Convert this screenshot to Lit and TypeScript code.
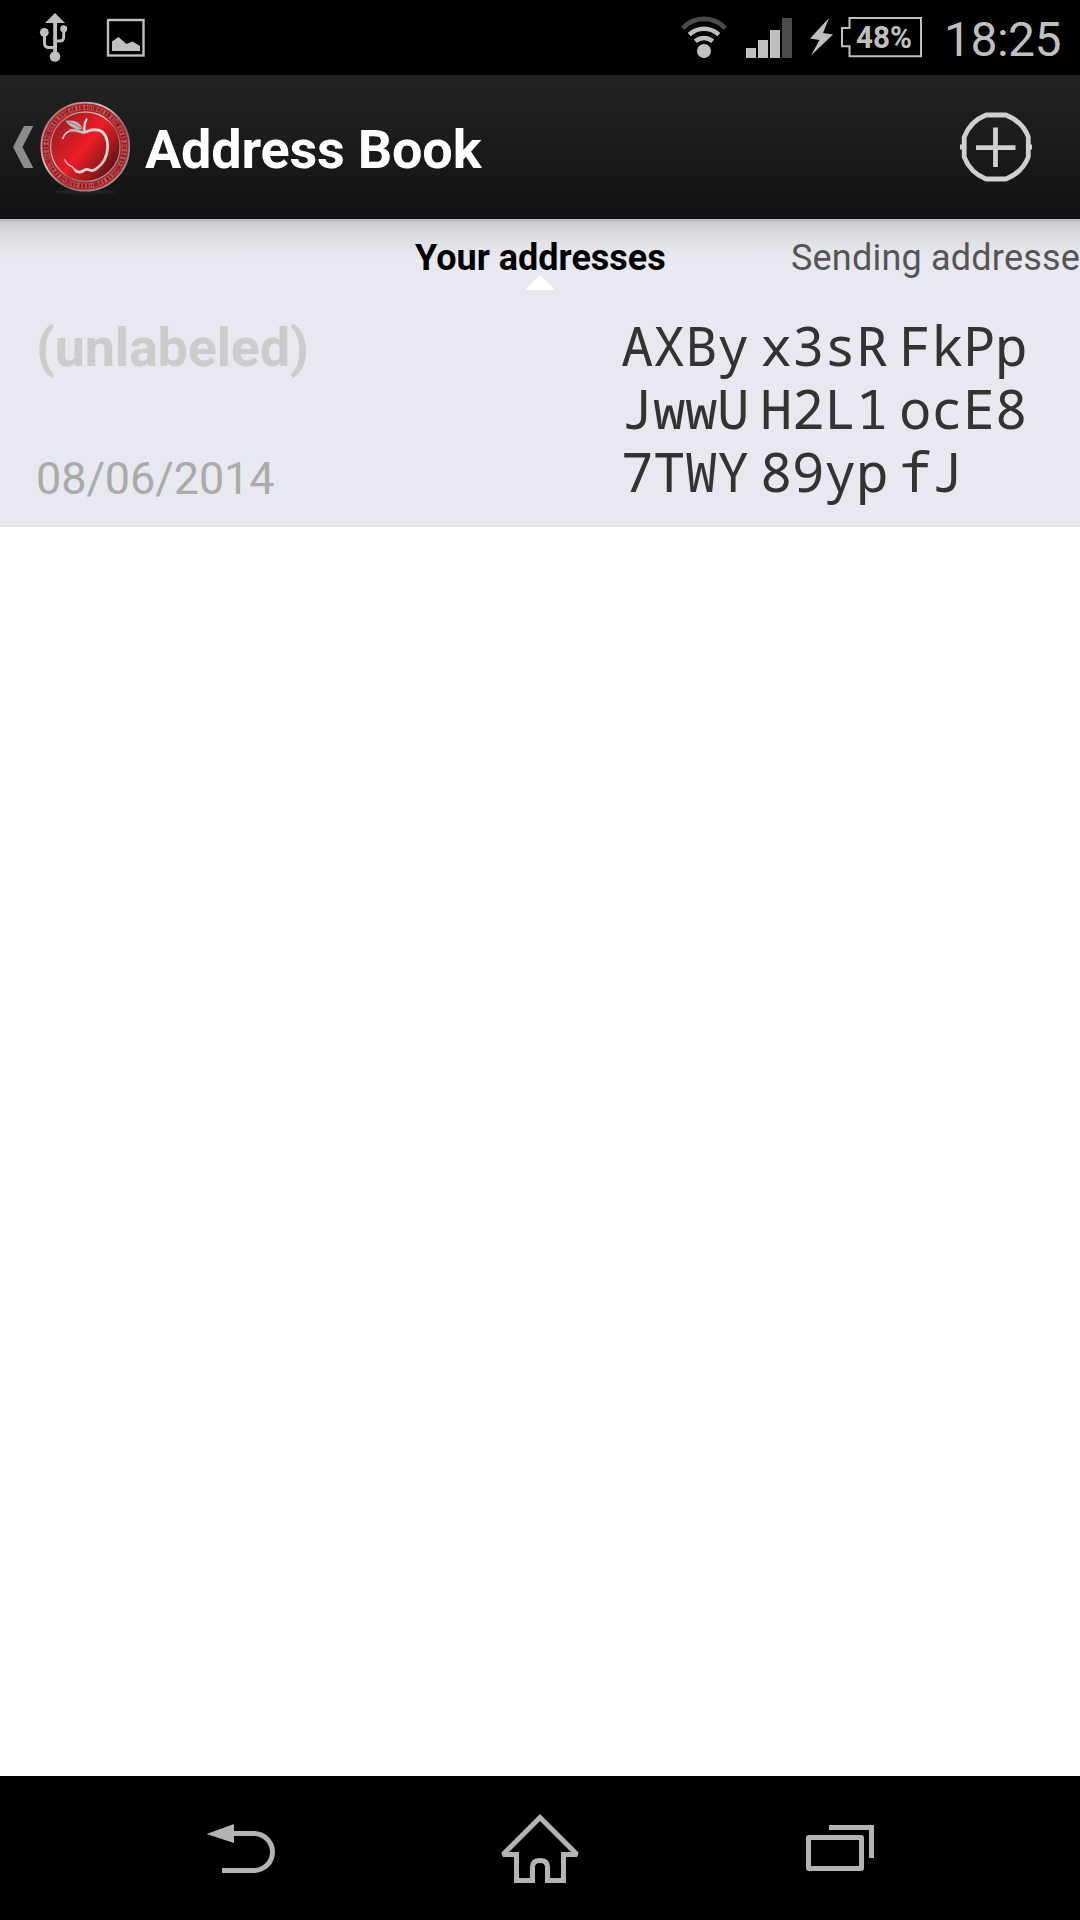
import { LitElement, html, css, svg } from "lit";
import { customElement, property } from "lit/decorators.js";

interface AddressEntry {
  label: string;
  date: string;
  lines: string[][];
}

@customElement("status-bar")
class StatusBar extends LitElement {
  static styles = css`
    :host {
      display: flex;
      justify-content: space-between;
      height: 75px;
      background: #000;
      color: #bfbfbf;
    }
    svg { display: block; }
    .right { display: flex; }
    .time {
      font-size: 48px;
      line-height: 79px;
      letter-spacing: -0.5px;
      width: 136px;
    }
    .pct { font: 700 31px Roboto, sans-serif; }
  `;
  render() {
    return html`
      <svg width="200" height="75" viewBox="0 0 200 75" fill="#bfbfbf">
        <path d="M55 13L65 23H45Z" />
        <path d="M53.2 20h3.8v34h-3.8z" />
        <circle cx="55" cy="56.5" r="5.3" />
        <circle cx="44.3" cy="32.3" r="4.4" />
        <circle cx="63.7" cy="28.8" r="3.5" />
        <path d="M44.5 33v10q0 4.5 4.5 4.5h6M63.7 29v8q0 4-4 4H56" fill="none" stroke="#bfbfbf" stroke-width="3" />
        <rect x="108" y="20" width="35.500" height="35.500" fill="none" stroke="#bfbfbf" stroke-width="2.400" />
        <path d="M112 51V41.500L118.500 37L126.500 44L132.500 41.500L140 46V51Z" />
      </svg>
      <div class="right">
        <svg width="284" height="75" viewBox="660 0 284 75" fill="#bfbfbf">
          <g fill="none" stroke-width="4.600">
            <path d="M682.700 28.200A29 29 0 0 1 725.300 28.200" stroke="#4c4c4c" />
            <path d="M689.200 34.700A21.500 21.500 0 0 1 718.800 34.700" stroke="#bfbfbf" />
            <path d="M695.300 41.300A13 13 0 0 1 712.700 41.300" stroke="#bfbfbf" />
          </g>
          <circle cx="704" cy="51" r="7" />
          <path d="M746 48h10v10h-10zM758 40h10v18h-10zM770 30h10v28h-10z" />
          <path d="M782 18h10v40h-10z" fill="#4c4c4c" />
          <path d="M829 18L810 38.500L819.500 40L811 55.500L833 34.500L823 33Z" />
          <path d="M849.500 18H921V56.200H849.500V46.200H842V28H849.500Z" fill="none" stroke="#bfbfbf" stroke-width="2" />
          <text class="pct" x="856" y="47.800" textLength="56" lengthAdjust="spacingAndGlyphs">48%</text>
        </svg>
        <div class="time">18:25</div>
      </div>
    `;
  }
}

@customElement("action-bar")
class ActionBar extends LitElement {
  @property() heading = "";
  static styles = css`
    :host {
      display: flex;
      align-items: center;
      height: 144px;
      background: linear-gradient(#232323, #121212);
    }
    svg { display: block; }
    .heading {
      flex: 1;
      margin: 5px 0 0;
      font-size: 54px;
      line-height: 64px;
      font-weight: 700;
      letter-spacing: -0.2px;
      color: #fff;
      white-space: nowrap;
    }
  `;
  render() {
    return html`
      <svg width="145" height="144" viewBox="0 75 145 144">
        <defs>
          <linearGradient id="face" x1="0" y1="0.100" x2="1" y2="0.900">
            <stop offset="0" stop-color="#8d1b20" />
            <stop offset="0.250" stop-color="#c01d24" />
            <stop offset="0.500" stop-color="#ed1c24" />
            <stop offset="0.720" stop-color="#a3191f" />
            <stop offset="1" stop-color="#3d0c0e" />
          </linearGradient>
          <linearGradient id="rim" x1="0" y1="0" x2="1" y2="1">
            <stop offset="0" stop-color="#9b5a5c" />
            <stop offset="0.400" stop-color="#d9c5c5" />
            <stop offset="0.600" stop-color="#8b6666" />
            <stop offset="1" stop-color="#aaa" />
          </linearGradient>
          <linearGradient id="silver" x1="0" y1="0" x2="1" y2="1">
            <stop offset="0" stop-color="#b9a5a5" />
            <stop offset="0.500" stop-color="#ece6e6" />
            <stop offset="1" stop-color="#c5b5b5" />
          </linearGradient>
        </defs>
        <path d="M24 126H33.300L22.500 147L33.300 168H24L13 147Z" fill="#8c8c8c" />
        <ellipse cx="85" cy="192" rx="31" ry="2.500" fill="#2a2a2a" opacity="0.600" />
        <circle cx="85.300" cy="146.700" r="44" fill="#b81f26" stroke="url(#rim)" stroke-width="1.700" />
        <circle cx="85.300" cy="146.700" r="39.200" fill="none" stroke="#ad8284" stroke-width="5"
          stroke-dasharray="1.500 1.200 2.500 1.400 1.200 2.200 3 1.300" opacity="0.600" />
        <circle cx="85.300" cy="146.700" r="39.200" fill="none" stroke="#5f1115" stroke-width="3"
          stroke-dasharray="2 2.600 1.200 2.900 1.500 2.100" opacity="0.650" />
        <circle cx="85.300" cy="146.700" r="34.700" fill="url(#face)" stroke="url(#rim)" stroke-width="1.300" />
        <g fill="none" stroke="url(#silver)" stroke-linecap="round" stroke-linejoin="round">
          <path d="M62.800 138.500Q64.500 132.500 71 130.500" stroke-width="1.500" />
          <path d="M70 130.700Q75.500 129.500 80 131.500Q84.500 133.300 88.500 131Q93 129 98.500 130.200C105 132 108 139.500 107.700 147C107.300 156.500 102.500 164.500 96.500 168.700Q92.500 171.700 89.500 170Q86 168.500 83.500 170.800Q79 173.500 75.500 170.500" stroke-width="2.800" />
          <path d="M76 171Q73.500 169 72.500 167Q67.500 165 64.500 159.500" stroke-width="1.500" />
          <path d="M84.500 130.500Q83.500 124.500 86.500 119.500" stroke-width="2.400" />
        </g>
        <path d="M65.500 120.800Q79 118.500 83 129Q71.500 130.500 65.500 120.800Z" fill="#bfb3b3" />
        <path d="M68 121.800Q76 124 82 128.500" fill="none" stroke="#7a6666" stroke-width="0.800" />
      </svg>
      <h1 class="heading">${this.heading}</h1>
      <svg width="160" height="144" viewBox="920 75 160 144">
        <path d="M986 115H1006C1016 119 1024.500 127 1028.300 137V157C1024.500 167 1016 175 1006 179H986C976 175 968 167 964.200 157V137C968 127 976 119 986 115Z"
          fill="none" stroke="#d0d0d0" stroke-width="4.800" stroke-linejoin="round" />
        <path d="M960 147h4M1028 147h4M995.500 127.500v39.500M976 147.700h39.500" stroke="#d0d0d0" stroke-width="4.800" />
      </svg>
    `;
  }
}

@customElement("tab-strip")
class TabStrip extends LitElement {
  static styles = css`
    :host {
      display: grid;
      grid-template-columns: 415px 376px 289px;
      height: 71px;
      overflow: hidden;
      background: linear-gradient(#bfbfc4 0, #bfbfc4 3px, #cbcbd0 3px, #d7d7de 12px, #e1e1e8 24px, #e8e8f0 40px);
      font-size: 36px;
      line-height: 78px;
      white-space: nowrap;
    }
    .current {
      grid-column: 2;
      position: relative;
      font-weight: 700;
      color: #000;
    }
    .marker {
      position: absolute;
      left: 110px;
      top: 56px;
      width: 30px;
      height: 15px;
      background: #fff;
      clip-path: polygon(50% 0, 100% 100%, 0 100%);
    }
    .next {
      color: #555;
      letter-spacing: 0.2px;
    }
  `;
  render() {
    return html`
      <div class="current">Your addresses<div class="marker"></div></div>
      <div class="next">Sending addresses</div>
    `;
  }
}

@customElement("address-row")
class AddressRow extends LitElement {
  @property({ attribute: false }) entry!: AddressEntry;
  static styles = css`
    :host {
      display: flex;
      justify-content: space-between;
      box-sizing: border-box;
      height: 237px;
      padding: 25px 0 0 36px;
      background: #e8e8f0;
      border-bottom: 2px solid #e4e4e4;
    }
    .meta {
      display: flex;
      flex-direction: column;
      justify-content: space-between;
      height: 190px;
      padding-top: 1px;
    }
    .label {
      font-size: 54px;
      line-height: 64px;
      font-weight: 700;
      letter-spacing: -0.2px;
      color: #ccc;
    }
    .date {
      font-size: 45px;
      line-height: 54px;
      letter-spacing: -0.1px;
      color: #aaa;
    }
    .address {
      width: 459px;
      margin-top: -1px;
      font-family: "Noto Sans Mono", "DejaVu Sans Mono", monospace;
      font-size: 54px;
      line-height: 63px;
      letter-spacing: -0.4px;
      color: #333;
      white-space: nowrap;
    }
    .line {
      display: flex;
      gap: 11px;
    }
  `;
  render() {
    return html`
      <div class="meta">
        <div class="label">${this.entry.label}</div>
        <div class="date">${this.entry.date}</div>
      </div>
      <div class="address">
        ${this.entry.lines.map((l) => html`<div class="line">${l.map((g) => html`<span>${g}</span>`)}</div>`)}
      </div>
    `;
  }
}

@customElement("nav-bar")
class NavBar extends LitElement {
  static styles = css`
    :host {
      display: flex;
      justify-content: center;
      height: 144px;
      background: #000;
    }
    svg { display: block; }
  `;
  private icon(x: number, shape: unknown) {
    return html`<svg width="300" height="144" viewBox="${x} 1776 300 144" fill="none" stroke="#b3b3b3" stroke-width="5">${shape}</svg>`;
  }
  render() {
    return html`
      ${this.icon(90, svg`<path d="M232 1833.500H254A18.500 18.500 0 0 1 254 1870.500H222" /><path d="M206.500 1834L234 1824V1843Z" fill="#b3b3b3" stroke="none" />`)}
      ${this.icon(390, svg`<path d="M540 1817.500L503 1854.500H516.500V1880.500H532.500V1867Q532.500 1860.500 540 1860.500T547.500 1867V1880.500H563.500V1854.500H577Z" stroke-miterlimit="2" />`)}
      ${this.icon(690, svg`<rect x="808.500" y="1837.500" width="53" height="31" rx="0.500" /><path d="M829 1827.500H871.500V1858" />`)}
    `;
  }
}

@customElement("app-root")
class AppRoot extends LitElement {
  static styles = css`
    :host {
      display: flex;
      flex-direction: column;
      height: 1920px;
      background: #fff;
      font-family: Roboto, sans-serif;
      overflow: hidden;
    }
    .list { flex: 1; }
  `;
  private entries: AddressEntry[] = [
    {
      label: "(unlabeled)",
      date: "08/06/2014",
      lines: [
        ["AXBy", "x3sR", "FkPp"],
        ["JwwU", "H2L1", "ocE8"],
        ["7TWY", "89yp", "fJ"],
      ],
    },
  ];
  render() {
    return html`
      <status-bar></status-bar>
      <action-bar heading="Address Book"></action-bar>
      <tab-strip></tab-strip>
      <div class="list">
        ${this.entries.map((e) => html`<address-row .entry=${e}></address-row>`)}
      </div>
      <nav-bar></nav-bar>
    `;
  }
}
